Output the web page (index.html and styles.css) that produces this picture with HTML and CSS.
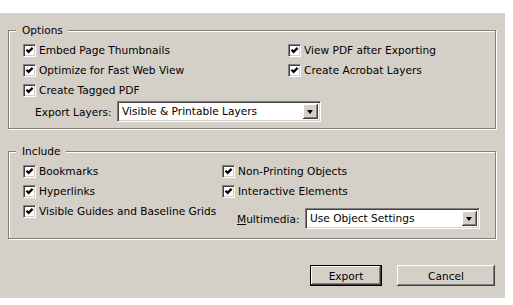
FILE: index.html
```html
<!DOCTYPE html>
<html lang="en">

<head>
    <meta charset="UTF-8">
    <title>Export Adobe PDF</title>
    <link rel="stylesheet" href="styles.css">
</head>

<body>
    <div class="dialog">
        <!-- Options -->
        <fieldset class="group group-options">
            <legend>Options</legend>
            <div class="opt-grid">
                <label class="check"><span class="box"><svg viewBox="0 0 9 9"><polyline points="1.5,3.8 3.6,5.9 7.6,1.9" /></svg></span>Embed Page Thumbnails</label>
                <label class="check"><span class="box"><svg viewBox="0 0 9 9"><polyline points="1.5,3.8 3.6,5.9 7.6,1.9" /></svg></span>View PDF after Exporting</label>
                <label class="check"><span class="box"><svg viewBox="0 0 9 9"><polyline points="1.5,3.8 3.6,5.9 7.6,1.9" /></svg></span>Optimize for Fast Web View</label>
                <label class="check"><span class="box"><svg viewBox="0 0 9 9"><polyline points="1.5,3.8 3.6,5.9 7.6,1.9" /></svg></span>Create Acrobat Layers</label>
                <label class="check"><span class="box"><svg viewBox="0 0 9 9"><polyline points="1.5,3.8 3.6,5.9 7.6,1.9" /></svg></span>Create Tagged PDF</label>
            </div>
            <div class="field-row layers-row">
                <span class="field-label">Export Layers:</span>
                <div class="select select-layers">
                    <span class="select-value">Visible &amp; Printable Layers</span>
                    <span class="select-btn"><span class="arrow"></span></span>
                </div>
            </div>
        </fieldset>

        <!-- Include -->
        <fieldset class="group group-include">
            <legend>Include</legend>
            <div class="inc-grid">
                <div class="inc-col">
                    <label class="check"><span class="box"><svg viewBox="0 0 9 9"><polyline points="1.5,3.8 3.6,5.9 7.6,1.9" /></svg></span>Bookmarks</label>
                    <label class="check"><span class="box"><svg viewBox="0 0 9 9"><polyline points="1.5,3.8 3.6,5.9 7.6,1.9" /></svg></span>Hyperlinks</label>
                    <label class="check"><span class="box"><svg viewBox="0 0 9 9"><polyline points="1.5,3.8 3.6,5.9 7.6,1.9" /></svg></span>Visible Guides and Baseline Grids</label>
                </div>
                <div class="inc-col">
                    <label class="check"><span class="box"><svg viewBox="0 0 9 9"><polyline points="1.5,3.8 3.6,5.9 7.6,1.9" /></svg></span>Non-Printing Objects</label>
                    <label class="check"><span class="box"><svg viewBox="0 0 9 9"><polyline points="1.5,3.8 3.6,5.9 7.6,1.9" /></svg></span>Interactive Elements</label>
                    <div class="field-row media-row">
                        <span class="field-label"><u>M</u>ultimedia:</span>
                        <div class="select select-media">
                            <span class="select-value">Use Object Settings</span>
                            <span class="select-btn"><span class="arrow"></span></span>
                        </div>
                    </div>
                </div>
            </div>
        </fieldset>

        <!-- buttons -->
        <div class="actions">
            <button class="btn btn-default">Export</button>
            <button class="btn">Cancel</button>
        </div>
    </div>
</body>

</html>
```

FILE: styles.css
```css
/* reset */
* {
    margin: 0;
    padding: 0;
    box-sizing: border-box;
}

body {
    background: #ffffff;
    font-family: "DejaVu Sans", "Liberation Sans", sans-serif;
    font-size: 10.6px;
    color: #000;
}

/* dialog panel */
.dialog {
    width: 505px;
    height: 285px;
    margin-top: 13px;
    background: #d4d0c8;
    padding: 10px 9px 0 8px;
}

/* group boxes (etched) */
.group {
    border: 1px solid #808080;
    box-shadow: inset 1px 1px 0 #ffffff, 1px 1px 0 #ffffff;
    padding: 0 0 0 14px;
    min-inline-size: 0;
}

.group legend {
    line-height: 14px;
    margin-left: -7px;
    padding: 0 5px 0 6px;
    background: #d4d0c8;
}

.group-options {
    height: 106px;
    padding-top: 3px;
}

.group-include {
    margin-top: 15px;
    height: 95px;
    padding-top: 3px;
}

/* checkboxes */
.check {
    display: flex;
    align-items: center;
    height: 20px;
    white-space: nowrap;
}

.box {
    width: 13px;
    height: 13px;
    margin-right: 3px;
    background: #fff;
    border-top: 1px solid #808080;
    border-left: 1px solid #808080;
    border-right: 1px solid #ffffff;
    border-bottom: 1px solid #ffffff;
    box-shadow: inset 1px 1px 0 #404040, inset -1px -1px 0 #d4d0c8;
    padding: 1px;
    flex: none;
}

.box svg {
    display: block;
    width: 9px;
    height: 9px;
    fill: none;
    stroke: #000;
    stroke-width: 2.2;
}

.opt-grid {
    display: grid;
    grid-template-columns: 265px 1fr;
}

.inc-grid {
    display: grid;
    grid-template-columns: 199px 1fr;
}

/* label + dropdown rows */
.field-row {
    display: flex;
    align-items: center;
}

.layers-row {
    margin-top: 1px;
    padding-left: 12px;
}

.layers-row .field-label {
    width: 82px;
}

.media-row {
    margin-top: 7px;
    padding-left: 15px;
}

.media-row .field-label {
    width: 68px;
}

.select {
    display: flex;
    height: 21px;
    background: #fff;
    border-top: 1px solid #808080;
    border-left: 1px solid #808080;
    border-right: 1px solid #ffffff;
    border-bottom: 1px solid #ffffff;
    box-shadow: inset 1px 1px 0 #404040, inset -1px -1px 0 #d4d0c8;
    padding: 2px;
}

.select-layers {
    width: 204px;
}

.select-media {
    width: 175px;
}

.select-value {
    flex: 1;
    line-height: 15px;
    padding-left: 2px;
    white-space: nowrap;
}

.select-btn {
    width: 15px;
    background: #d4d0c8;
    box-shadow: inset -1px -1px 0 #404040, inset 1px 1px 0 #ffffff, inset -2px -2px 0 #808080;
    display: flex;
    justify-content: center;
    align-items: center;
}

.arrow {
    width: 0;
    height: 0;
    border-left: 3.5px solid transparent;
    border-right: 3.5px solid transparent;
    border-top: 4px solid #000;
    margin-right: 1px;
}

/* buttons */
.actions {
    display: flex;
    justify-content: flex-end;
    gap: 15px;
    margin-top: 26px;
    padding-right: 1px;
}

.btn {
    height: 21px;
    font: inherit;
    background: #d4d0c8;
    border: none;
    box-shadow: inset -1px -1px 0 #404040, inset 1px 1px 0 #ffffff, inset -2px -2px 0 #808080;
    width: 98px;
}

.btn-default {
    width: 72px;
    border: 1px solid #000;
}
```
